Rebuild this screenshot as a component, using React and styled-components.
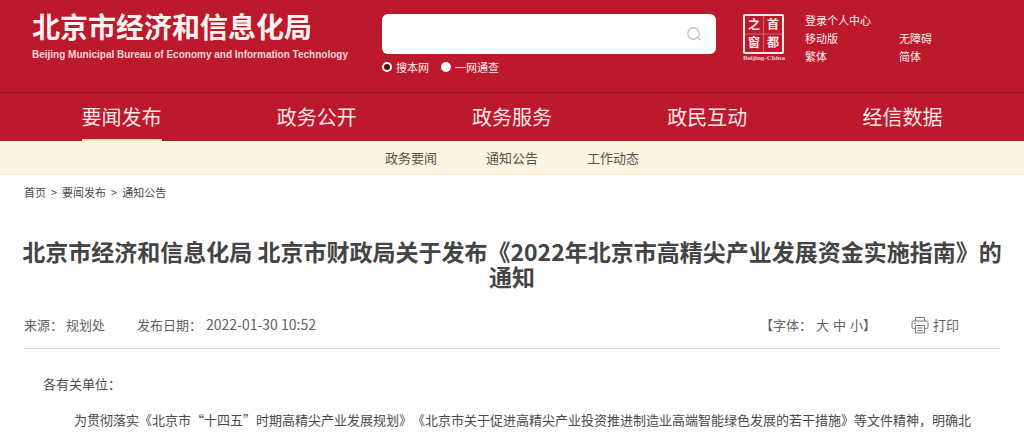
import React from "react";
import styled, { createGlobalStyle } from "styled-components";

const RED = "#bd192d";
const CREAM = "#fcf3e0";

const GlobalStyle = createGlobalStyle`
  *, *::before, *::after { box-sizing: border-box; }
  body {
    margin: 0;
    background: #fefefe;
    color: #4a4a4a;
    font-family: "Noto Sans CJK SC", sans-serif;
    font-size: 13px;
    line-height: 20px;
    text-spacing-trim: space-all;
  }
  a { color: inherit; text-decoration: none; }
  h1, p, ul { margin: 0; padding: 0; }
  ul { list-style: none; }
`;

const Header = styled.header`
  display: flex;
  align-items: flex-start;
  min-height: 93px;
  padding: 14px 32px 0;
  background: ${RED};
  border-bottom: 1px solid #9f1222;
  color: #fdeeee;
`;

const Brand = styled.a`
  flex: 0 0 350px;
  display: flex;
  flex-direction: column;
`;

const BrandName = styled.span`
  font-size: 28px;
  line-height: 24px;
  font-weight: 700;
  color: #fff4f2;
`;

const BrandSub = styled.span`
  margin-top: 10px;
  font-family: "Liberation Sans", sans-serif;
  font-size: 10px;
  line-height: 14px;
  font-weight: 700;
  color: #f8d5d6;
  white-space: nowrap;
`;

const SearchForm = styled.form`
  flex: 1 1 auto;
  min-width: 0;
`;

const SearchBox = styled.div`
  display: flex;
  align-items: center;
  height: 40px;
  padding-right: 12px;
  background: #fff;
  border-radius: 6px;
`;

const SearchInput = styled.input`
  flex: 1 1 auto;
  min-width: 0;
  height: 100%;
  padding: 0 12px;
  border: 0;
  outline: 0;
  background: transparent;
  font: inherit;
`;

const SearchButton = styled.button`
  display: flex;
  padding: 2px;
  border: 0;
  background: transparent;
  color: #c4c4c8;
`;

const Scopes = styled.div`
  display: flex;
  gap: 12px;
  margin-top: 5px;
`;

const Scope = styled.label`
  display: flex;
  align-items: center;
  gap: 4px;
  font-size: 11px;
  line-height: 16px;
`;

const ScopeRadio = styled.input`
  appearance: none;
  width: 10px;
  height: 10px;
  margin: 0;
  border: 2px solid #fff;
  border-radius: 50%;
  background: #fff;
  &:checked { background: #5a0a12; }
`;

const Seal = styled.a`
  flex: 0 0 44px;
  margin: 0 19px 0 26px;
  svg { display: block; }
`;

const Tools = styled.ul`
  flex: 0 0 187px;
  display: grid;
  grid-template-columns: 94px 1fr;
  font-size: 11px;
  line-height: 18px;
  margin-top: -3px;
`;

const ToolItem = styled.li`
  grid-column: ${(p) => (p.$wide ? "1 / -1" : "auto")};
`;

const MainNav = styled.nav`
  display: grid;
  grid-template-columns: repeat(5, 1fr);
  justify-items: center;
  padding: 0 24px;
  background: ${RED};
`;

const NavLink = styled.a`
  height: 48px;
  border-bottom: 2px solid ${(p) => (p.$active ? "#fbdcae" : "transparent")};
  color: #fde6e6;
  font-size: 20px;
  line-height: 48px;
`;

const SubNav = styled.nav`
  display: flex;
  justify-content: center;
  gap: 49px;
  background: ${CREAM};
  border-bottom: 1px solid #f3e8d6;
  line-height: 33px;
  color: #57524a;
`;

const Crumbs = styled.nav`
  display: flex;
  gap: 5px;
  padding: 9px 24px 0;
  font-size: 11px;
  line-height: 16px;
`;

const Title = styled.h1`
  padding: 39px 16px 0;
  text-align: center;
  font-size: 23px;
  line-height: 25px;
  font-weight: 700;
  color: #444;
`;

const Meta = styled.div`
  display: flex;
  align-items: center;
  margin: 25px 24px 0;
  padding: 0 41px 13px 0;
  border-bottom: 1px solid #dcdcdc;
  color: #626262;
`;

const Source = styled.span`
  margin-right: 32px;
`;

const Published = styled.span`
  flex: 1;
  time { margin-left: 4px; font-size: 14px; }
`;

const SizePicker = styled.div`
  display: flex;
  margin-right: 35px;
`;

const PlainButton = styled.button`
  display: flex;
  align-items: center;
  gap: 4px;
  margin: 0;
  padding: 0 0 0 ${(p) => (p.$spaced ? "4px" : "0")};
  border: 0;
  background: transparent;
  color: inherit;
  font: inherit;
`;

const Article = styled.article`
  padding: 17px 43px 0;
`;

const Paragraph = styled.p`
  line-height: 36px;
  padding-left: ${(p) => (p.$indent ? "31px" : "0")};
  white-space: nowrap;
`;

const SearchIcon = () => (
  <svg width="16" height="16" viewBox="0 0 16 16" fill="none" stroke="currentColor" strokeWidth="1.4" strokeLinecap="round" aria-hidden="true">
    <circle cx="7.5" cy="7.5" r="5.7" />
    <path d="M11.7 11.7 14.2 13.7" />
  </svg>
);

const PrintIcon = () => (
  <svg width="18" height="18" viewBox="0 0 18 18" fill="none" stroke="#777" strokeWidth="1" strokeLinejoin="round" aria-hidden="true">
    <path d="M4.5 5V1.5h9V5" />
    <path d="M4.5 12.5h-2A1.5 1.5 0 0 1 1 11V6.5A1.5 1.5 0 0 1 2.500 5h13A1.500 1.500 0 0 1 17 6.500V11a1.500 1.500 0 0 1-1.500 1.500h-2" />
    <path d="M4.500 9.500h9V17h-9zM6.500 12h5M6.500 14.500h5M3 7.500h2" />
  </svg>
);

const SealMark = () => (
  <svg width="44" height="48" viewBox="0 0 44 48" role="img" aria-label="首都之窗">
    <rect x="2" y="1" width="39" height="38" rx="1" fill="none" stroke="#ffe9e8" strokeWidth="2" />
    <path d="M21.500 2v36M3 20h37" stroke="#d9616d" strokeWidth="1" />
    <g fill="#ffe9e8" fontFamily='"Noto Sans CJK SC", sans-serif' fontSize="12" fontWeight="700" textAnchor="middle">
      <text x="12" y="15">之</text>
      <text x="31" y="15">首</text>
      <text x="12" y="33">窗</text>
      <text x="31" y="33">都</text>
    </g>
    <text x="22" y="46" fill="#f6c9cb" fontFamily='"Liberation Serif", serif' fontSize="7" fontWeight="700" textAnchor="middle">Beijing-China</text>
  </svg>
);

const navItems = ["要闻发布", "政务公开", "政务服务", "政民互动", "经信数据"];
const subItems = ["政务要闻", "通知公告", "工作动态"];
const tools = ["登录个人中心", "移动版", "无障碍", "繁体", "简体"];

export default function App() {
  return (
    <>
      <GlobalStyle />
      <Header>
        <Brand href="#">
          <BrandName>北京市经济和信息化局</BrandName>
          <BrandSub>Beijing Municipal Bureau of Economy and Information Technology</BrandSub>
        </Brand>
        <SearchForm role="search" onSubmit={(e) => e.preventDefault()}>
          <SearchBox>
            <SearchInput type="text" aria-label="搜索" />
            <SearchButton type="submit" aria-label="搜索">
              <SearchIcon />
            </SearchButton>
          </SearchBox>
          <Scopes>
            <Scope>
              <ScopeRadio type="radio" name="scope" defaultChecked />
              搜本网
            </Scope>
            <Scope>
              <ScopeRadio type="radio" name="scope" />
              一网通查
            </Scope>
          </Scopes>
        </SearchForm>
        <Seal href="#">
          <SealMark />
        </Seal>
        <Tools>
          {tools.map((t, i) => (
            <ToolItem key={t} $wide={i === 0}>
              <a href="#">{t}</a>
            </ToolItem>
          ))}
        </Tools>
      </Header>
      <MainNav>
        {navItems.map((t, i) => (
          <NavLink key={t} href="#" $active={i === 0}>
            {t}
          </NavLink>
        ))}
      </MainNav>
      <SubNav>
        {subItems.map((t) => (
          <a key={t} href="#">
            {t}
          </a>
        ))}
      </SubNav>
      <main>
        <Crumbs>
          <a href="#">首页</a>
          <span>&gt;</span>
          <a href="#">要闻发布</a>
          <span>&gt;</span>
          <a href="#">通知公告</a>
        </Crumbs>
        <Title>北京市经济和信息化局 北京市财政局关于发布《2022年北京市高精尖产业发展资金实施指南》的通知</Title>
        <Meta>
          <Source>来源： 规划处</Source>
          <Published>
            发布日期：<time dateTime="2022-01-30T10:52">2022-01-30 10:52</time>
          </Published>
          <SizePicker>
            【字体：
            <PlainButton type="button" $spaced>大</PlainButton>
            <PlainButton type="button" $spaced>中</PlainButton>
            <PlainButton type="button" $spaced>小</PlainButton>】
          </SizePicker>
          <PlainButton type="button">
            <PrintIcon />
            打印
          </PlainButton>
        </Meta>
        <Article>
          <Paragraph>各有关单位：</Paragraph>
          <Paragraph $indent>
            为贯彻落实《北京市“十四五”时期高精尖产业发展规划》《北京市关于促进高精尖产业投资推进制造业高端智能绿色发展的若干措施》等文件精神，明确北
          </Paragraph>
        </Article>
      </main>
    </>
  );
}
